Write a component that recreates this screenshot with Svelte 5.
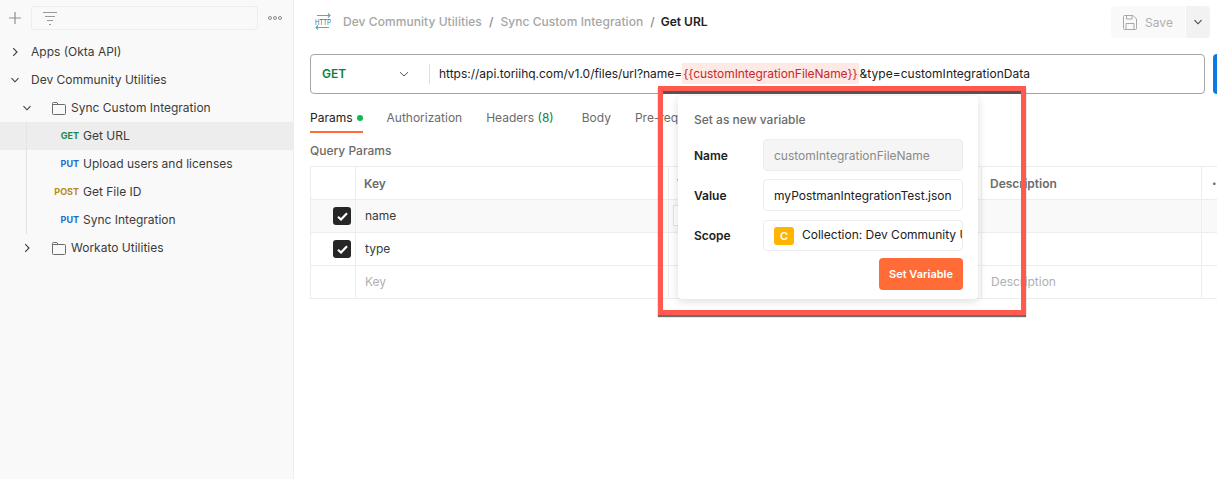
<script>
  const tree = [
    { kind: 'col', label: 'Apps (Okta API)', open: false },
    { kind: 'col', label: 'Dev Community Utilities', open: true },
    { kind: 'fold', label: 'Sync Custom Integration', open: true },
    { kind: 'req', m: 'GET', label: 'Get URL', sel: true },
    { kind: 'req', m: 'PUT', label: 'Upload users and licenses' },
    { kind: 'req', m: 'POST', label: 'Get File ID' },
    { kind: 'req', m: 'PUT', label: 'Sync Integration' },
    { kind: 'fold', label: 'Workato Utilities', open: false }
  ];
</script>

<div class="page">
  <aside class="side">
    <div class="side-top">
      <svg class="plus" width="14" height="14" viewBox="0 0 14 14"><path d="M7 1v12M1 7h12" stroke="#8f8f8f" stroke-width="1.2" fill="none"/></svg>
      <div class="search">
        <svg width="14" height="13" viewBox="0 0 14 13"><path d="M0 .5h14M2 4.500h10M4 8.500h6M6 12.500h2" stroke="#9a9a9a" stroke-width="1" fill="none"/></svg>
      </div>
      <svg class="dots" width="14" height="6" viewBox="0 0 14 6"><g fill="none" stroke="#8a8a8a"><circle cx="2" cy="3" r="1.500"/><circle cx="7" cy="3" r="1.500"/><circle cx="12" cy="3" r="1.500"/></g></svg>
    </div>
    <div class="tree">
      <span class="guide"></span>
      {#each tree as n}
        <div class="row {n.kind}" class:sel={n.sel}>
          {#if n.kind === 'req'}
            <span class="method {n.m}">{n.m}</span>
          {:else}
            <svg class="chev" width="10" height="10" viewBox="0 0 10 10">
              {#if n.open}<path d="M1.500 3.200 5 6.800l3.500-3.600" stroke="#3a3a3a" stroke-width="1.100" fill="none"/>
              {:else}<path d="M3.200 1.200 7 5 3.200 8.800" stroke="#3a3a3a" stroke-width="1.100" fill="none"/>{/if}
            </svg>
            {#if n.kind === 'fold'}
              <svg class="ficon" width="14" height="13" viewBox="0 0 14 13"><path d="M.5 11.500V1.500a1 1 0 0 1 1-1h3.300l1.400 2h6.300a1 1 0 0 1 1 1V11.500a1 1 0 0 1-1 1h-11a1 1 0 0 1-1-1zM.5 2.500h5.700" stroke="#6b6b6b" stroke-width="1" fill="none"/></svg>
            {/if}
          {/if}
          <span class="lbl">{n.label}</span>
        </div>
      {/each}
    </div>
  </aside>

  <main class="main">
    <header class="crumbs">
      <svg class="http" width="18" height="18" viewBox="0 0 18 18">
        <path d="M3 2.500h13M14 .5l2 2-2 2M2 14.500h13M4 12.500l-2 2 2 2" stroke="#5aa9b4" stroke-width="1.100" fill="none"/>
        <text x="1" y="11.500" textLength="16" lengthAdjust="spacingAndGlyphs" class="http-t">HTTP</text>
      </svg>
      <span class="c">Dev Community Utilities</span><span class="s">/</span>
      <span class="c">Sync Custom Integration</span><span class="s">/</span>
      <span class="cur">Get URL</span>
      <div class="save-wrap">
        <div class="save">
          <svg width="14" height="15" viewBox="0 0 14 15"><path d="M.5 1.500a1 1 0 0 1 1-1h8.500l3.500 3.500V13.500a1 1 0 0 1-1 1h-11a1 1 0 0 1-1-1zM3.500 .5v3.500h5.500V.5M3 14.500V8.500h8v6" stroke="#a8a8a8" fill="none"/></svg>
          <span>Save</span>
        </div>
        <div class="save-c">
          <svg width="10" height="10" viewBox="0 0 10 10"><path d="M1.500 3.200 5 6.800l3.500-3.600" stroke="#444" stroke-width="1.100" fill="none"/></svg>
        </div>
      </div>
    </header>

    <div class="urlrow">
      <div class="url">
        <div class="verb"><b>GET</b>
          <svg width="10" height="10" viewBox="0 0 10 10"><path d="M1 3.200 5 7l4-3.800" stroke="#555" stroke-width="1" fill="none"/></svg>
        </div>
        <div class="addr">https://api.toriihq.com/v1.0/files/url?name=<span class="var">{'{{customIntegrationFileName}}'}</span><span class="tail">&amp;type=customIntegrationData</span></div>
      </div>
      <div class="send"></div>
    </div>

    <nav class="tabs">
      <span class="tab on">Params<i class="dot"></i></span>
      <span class="tab">Authorization</span>
      <span class="tab">Headers <em>(8)</em></span>
      <span class="tab body-tab">Body</span>
      <span class="tab">Pre-request Script</span>
    </nav>

    <div class="qp">Query Params</div>

    <div class="table">
      <div class="tr head">
        <div class="td ck"></div><div class="td key">Key</div><div class="td val">Value</div><div class="td desc">Description</div><div class="td more">•••</div>
      </div>
      <div class="tr alt">
        <div class="td ck"><span class="box"><svg width="11" height="9" viewBox="0 0 11 9"><path d="M1 4.800 4 7.500 10 1.300" stroke="#fff" stroke-width="2.200" fill="none"/></svg></span></div>
        <div class="td key text">name</div><div class="td val"><span class="vbox"></span></div><div class="td desc"></div><div class="td more"></div>
      </div>
      <div class="tr">
        <div class="td ck"><span class="box"><svg width="11" height="9" viewBox="0 0 11 9"><path d="M1 4.800 4 7.500 10 1.300" stroke="#fff" stroke-width="2.200" fill="none"/></svg></span></div>
        <div class="td key text">type</div><div class="td val"></div><div class="td desc"></div><div class="td more"></div>
      </div>
      <div class="tr">
        <div class="td ck"></div><div class="td key ph">Key</div><div class="td val ph">Value</div><div class="td desc ph">Description</div><div class="td more"></div>
      </div>
    </div>
  </main>

  <div class="pop">
    <div class="pop-t">Set as new variable</div>
    <div class="f"><span class="lab">Name</span><div class="inp dis">customIntegrationFileName</div></div>
    <div class="f"><span class="lab">Value</span><div class="inp">myPostmanIntegrationTest.json</div></div>
    <div class="f third"><span class="lab">Scope</span><div class="inp scope"><span class="c-b">C</span><span class="sc">Collection: Dev Community Utilities</span></div></div>
    <div class="act"><span class="btn">Set Variable</span></div>
  </div>
  <div class="mark"></div>
</div>

<style>
  :global(body) { margin: 0; background: #fff; }
  .page { position: relative; width: 1217px; height: 479px; overflow: hidden; display: flex; font-family: Inter, "Liberation Sans", sans-serif; font-size: 12px; color: #212121; }
  .side { width: 294px; box-sizing: border-box; flex: none; background: #f9f9f9; border-right: 1px solid #ededed; }
  .side-top { height: 36px; display: flex; align-items: center; padding-left: 8px; box-sizing: border-box; }
  .plus { flex: none; }
  .search { margin-left: 9px; width: 227px; height: 24px; box-sizing: border-box; border: 1px solid #ededed; border-radius: 3px; display: flex; align-items: center; padding-left: 11px; }
  .dots { margin-left: 10px; }
  .tree { position: relative; padding-top: 2px; }
  .guide { position: absolute; left: 26px; top: 86px; height: 112px; width: 1px; background: #e4e4e4; z-index: 1; }
  .row { height: 28px; display: flex; align-items: center; font-size: 12px; color: #3b3b3b; white-space: nowrap; }
  .lbl { position: relative; top: -1px; }
  .row.sel { background: #ededed; }
  .col { padding-left: 10px; }
  .col .chev { margin-right: 11px; }
  .fold { padding-left: 22px; }
  .fold .chev { margin-right: 20px; }
  .ficon { margin-right: 5px; }
  .method { width: 79px; text-align: right; font-size: 9px; font-weight: 700; margin-right: 4px; position: relative; top: -1px; }
  .GET { color: #1d8a4c; }
  .PUT { color: #1c6bc9; }
  .POST { color: #b88a1a; }
  .main { flex: 1; min-width: 0; padding-left: 16px; display: flex; flex-direction: column; }
  .crumbs { height: 44px; box-sizing: border-box; padding-bottom: 1px; display: flex; align-items: center; font-size: 12px; font-weight: 500; letter-spacing: .06px; color: #a6a6a6; white-space: nowrap; }
  .http { margin: 0 11px 0 4px; flex: none; overflow: visible; }
  .http-t { font: 400 9.500px "Liberation Sans", sans-serif; fill: #1f8090; }
  .s { margin: 0 7px; color: #888; }
  .cur { color: #212121; font-weight: 600; letter-spacing: 0; margin-left: -1px; }
  .save-wrap { margin-left: auto; margin-right: 7px; display: flex; gap: 1px; margin-top: 1px; }
  .save { width: 74px; height: 32px; background: #f9f9f9; border-radius: 4px 0 0 4px; display: flex; align-items: center; justify-content: center; gap: 8px; color: #b0b0b0; font-weight: 400; font-size: 12px; letter-spacing: 0; }
  .save-c { width: 24px; height: 32px; background: #f2f2f2; border-radius: 0 4px 4px 0; display: flex; align-items: center; justify-content: center; }
  .urlrow { margin-top: 10px; display: flex; gap: 8px; height: 40px; }
  .url { width: 895px; flex: none; box-sizing: border-box; border: 1px solid #a6a6a6; border-radius: 4px; display: flex; align-items: center; }
  .verb { width: 119px; height: 20px; flex: none; box-sizing: border-box; border-right: 1px solid #e0e0e0; display: flex; align-items: center; padding-left: 11px; }
  .verb b { color: #0f8040; font-weight: 600; width: 77px; font-size: 12px; position: relative; top: -1px; }
  .addr { padding: 0 0 2px 9px; white-space: nowrap; font-size: 12px; letter-spacing: -.015px; color: #212121; }
  .var { color: #c62a2a; background: #ffe9e5; padding: 3px 1px; letter-spacing: -.06px; margin-right: 1px; }
  .tail { letter-spacing: .03px; }
  .send { width: 40px; background: #0b7ae6; border-radius: 4px 0 0 4px; }
  .tabs { height: 34px; padding-bottom: 2px; margin-top: 6px; display: flex; gap: 24px; align-items: center; font-size: 12px; color: #6b6b6b; white-space: nowrap; }
  .tab { position: relative; }
  .body-tab { margin-left: 4px; }
  .tab.on { color: #212121; }
  .tab.on::after { content: ""; position: absolute; left: 0; right: 0; bottom: -8px; height: 2px; background: #ff6c37; }
  .dot { display: inline-block; width: 6px; height: 6px; border-radius: 50%; background: #0cbb52; margin-left: 4px; vertical-align: 1px; }
  .tab em { font-style: normal; color: #0f8040; }
  .qp { margin-top: 7px; font-size: 12px; font-weight: 500; color: #6b6b6b; line-height: 16px; }
  .table { margin-top: 7px; border-top: 1px solid #ededed; border-left: 1px solid #ededed; }
  .tr { display: grid; grid-template-columns: 45px 313px 313px 220px 1fr; height: 33px; border-bottom: 1px solid #ededed; box-sizing: border-box; }
  .tr.alt { background: #f9f9f9; }
  .td { border-right: 1px solid #ededed; display: flex; align-items: center; padding-left: 8px; padding-bottom: 1px; box-sizing: border-box; }
  .td.more { border-right: 0; color: #888; font-size: 8px; padding-left: 10px; }
  .tr.head .td { color: #6b6b6b; font-weight: 600; padding-bottom: 0; }
  .tr.head .td.more { font-weight: 400; }
  .td.ck { padding-left: 22px; padding-bottom: 0; }
  .key.text { padding-left: 9px; color: #3b3b3b; }
  .ph { color: #b0b0b0; padding-left: 9px; }
  .vbox { width: 100%; height: 21px; margin-left: -4px; box-sizing: border-box; border: 1px solid #e4e4e4; background: #fff; }
  .box { width: 18px; height: 18px; border-radius: 3px; background: #262626; display: flex; align-items: center; justify-content: center; }
  .pop { position: absolute; left: 678px; top: 96px; width: 300px; height: 203px; box-sizing: border-box; background: #fff; border-radius: 4px; box-shadow: 0 2px 10px rgba(0,0,0,.14); padding: 16px 15px 0 16px; z-index: 2; }
  .pop-t { font-weight: 500; color: #6b6b6b; font-size: 12px; line-height: 15px; margin-bottom: 12px; }
  .f { display: flex; align-items: center; height: 32px; margin-bottom: 8px; }
  .f.third { height: 31px; margin-top: 9px; margin-bottom: 8px; }
  .lab { width: 69px; font-weight: 600; color: #212121; font-size: 12px; }
  .inp { width: 200px; height: 100%; box-sizing: border-box; border: 1px solid #ededed; border-radius: 4px; display: flex; align-items: center; padding-left: 10px; overflow: hidden; white-space: nowrap; font-size: 12px; color: #212121; }
  .inp.dis { background: #f5f5f5; color: #8a8a8a; }
  .c-b { flex: none; width: 20px; height: 18px; background: #ffb400; color: #fff; border-radius: 3px; display: flex; align-items: center; justify-content: center; font-weight: 600; font-size: 11px; margin-right: 8px; }
  .sc { color: #212121; position: relative; top: -1px; }
  .act { display: flex; justify-content: flex-end; margin-top: -1px; }
  .btn { width: 84px; height: 32px; background: #ff6c37; color: #fff; border-radius: 4px; font-weight: 600; font-size: 11px; display: flex; align-items: center; justify-content: center; }
  .mark { position: absolute; left: 658px; top: 86px; width: 368px; height: 229px; box-sizing: border-box; border: 5px solid #ff5a4d; box-shadow: inset 0 3px 0 #555, 0 2px 1px rgba(60,60,60,.75); z-index: 3; pointer-events: none; }
</style>
